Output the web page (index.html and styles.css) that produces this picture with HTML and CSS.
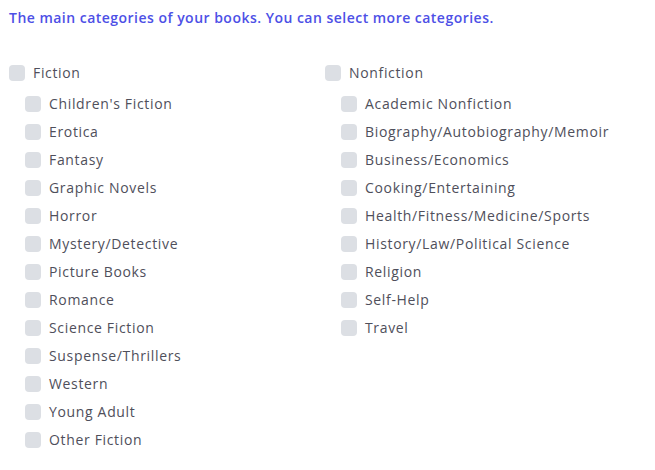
FILE: index.html
```html
<!DOCTYPE html>
<html>
<head>
<meta charset="utf-8">
<link rel="stylesheet" href="styles.css">
</head>
<body>
<div class="page">
  <p class="intro">The main categories of your books. You can select more categories.</p>
  <div class="columns">
    <div class="group">
      <label class="row parent"><span class="box"></span><span class="label">Fiction</span></label>
      <div class="children">
        <label class="row"><span class="box"></span><span class="label">Children's Fiction</span></label>
        <label class="row"><span class="box"></span><span class="label">Erotica</span></label>
        <label class="row"><span class="box"></span><span class="label">Fantasy</span></label>
        <label class="row"><span class="box"></span><span class="label">Graphic Novels</span></label>
        <label class="row"><span class="box"></span><span class="label">Horror</span></label>
        <label class="row"><span class="box"></span><span class="label">Mystery/Detective</span></label>
        <label class="row"><span class="box"></span><span class="label">Picture Books</span></label>
        <label class="row"><span class="box"></span><span class="label">Romance</span></label>
        <label class="row"><span class="box"></span><span class="label">Science Fiction</span></label>
        <label class="row"><span class="box"></span><span class="label">Suspense/Thrillers</span></label>
        <label class="row"><span class="box"></span><span class="label">Western</span></label>
        <label class="row"><span class="box"></span><span class="label">Young Adult</span></label>
        <label class="row"><span class="box"></span><span class="label">Other Fiction</span></label>
      </div>
    </div>
    <div class="group">
      <label class="row parent"><span class="box"></span><span class="label">Nonfiction</span></label>
      <div class="children">
        <label class="row"><span class="box"></span><span class="label">Academic Nonfiction</span></label>
        <label class="row"><span class="box"></span><span class="label">Biography/Autobiography/Memoir</span></label>
        <label class="row"><span class="box"></span><span class="label">Business/Economics</span></label>
        <label class="row"><span class="box"></span><span class="label">Cooking/Entertaining</span></label>
        <label class="row"><span class="box"></span><span class="label">Health/Fitness/Medicine/Sports</span></label>
        <label class="row"><span class="box"></span><span class="label">History/Law/Political Science</span></label>
        <label class="row"><span class="box"></span><span class="label">Religion</span></label>
        <label class="row"><span class="box"></span><span class="label">Self-Help</span></label>
        <label class="row"><span class="box"></span><span class="label">Travel</span></label>
      </div>
    </div>
  </div>
</div>
</body>
</html>
```
FILE: styles.css
```css
html, body {
  margin: 0;
  padding: 0;
  background: #ffffff;
}
.page {
  padding: 8px 9px 0 9px;
  font-family: "Open Sans", "Liberation Sans", sans-serif;
  font-size: 14px;
  color: #4f4f5b;
}
.intro {
  margin: 0;
  height: 20px;
  line-height: 20px;
  font-weight: 600;
  color: #4d50e6;
  letter-spacing: 0.48px;
}
.columns {
  margin-top: 31px;
  display: grid;
  grid-template-columns: 316px 316px;
}
.group {
  display: flex;
  flex-direction: column;
}
.row {
  display: flex;
  align-items: center;
  gap: 8px;
  height: 28px;
}
.parent {
  margin-bottom: 3px;
}
.children {
  display: flex;
  flex-direction: column;
  padding-left: 16px;
}
.box {
  width: 16px;
  height: 16px;
  border-radius: 4px;
  background: #dcdfe4;
  flex: none;
}
.label {
  line-height: 20px;
  letter-spacing: 0.66px;
}
```
